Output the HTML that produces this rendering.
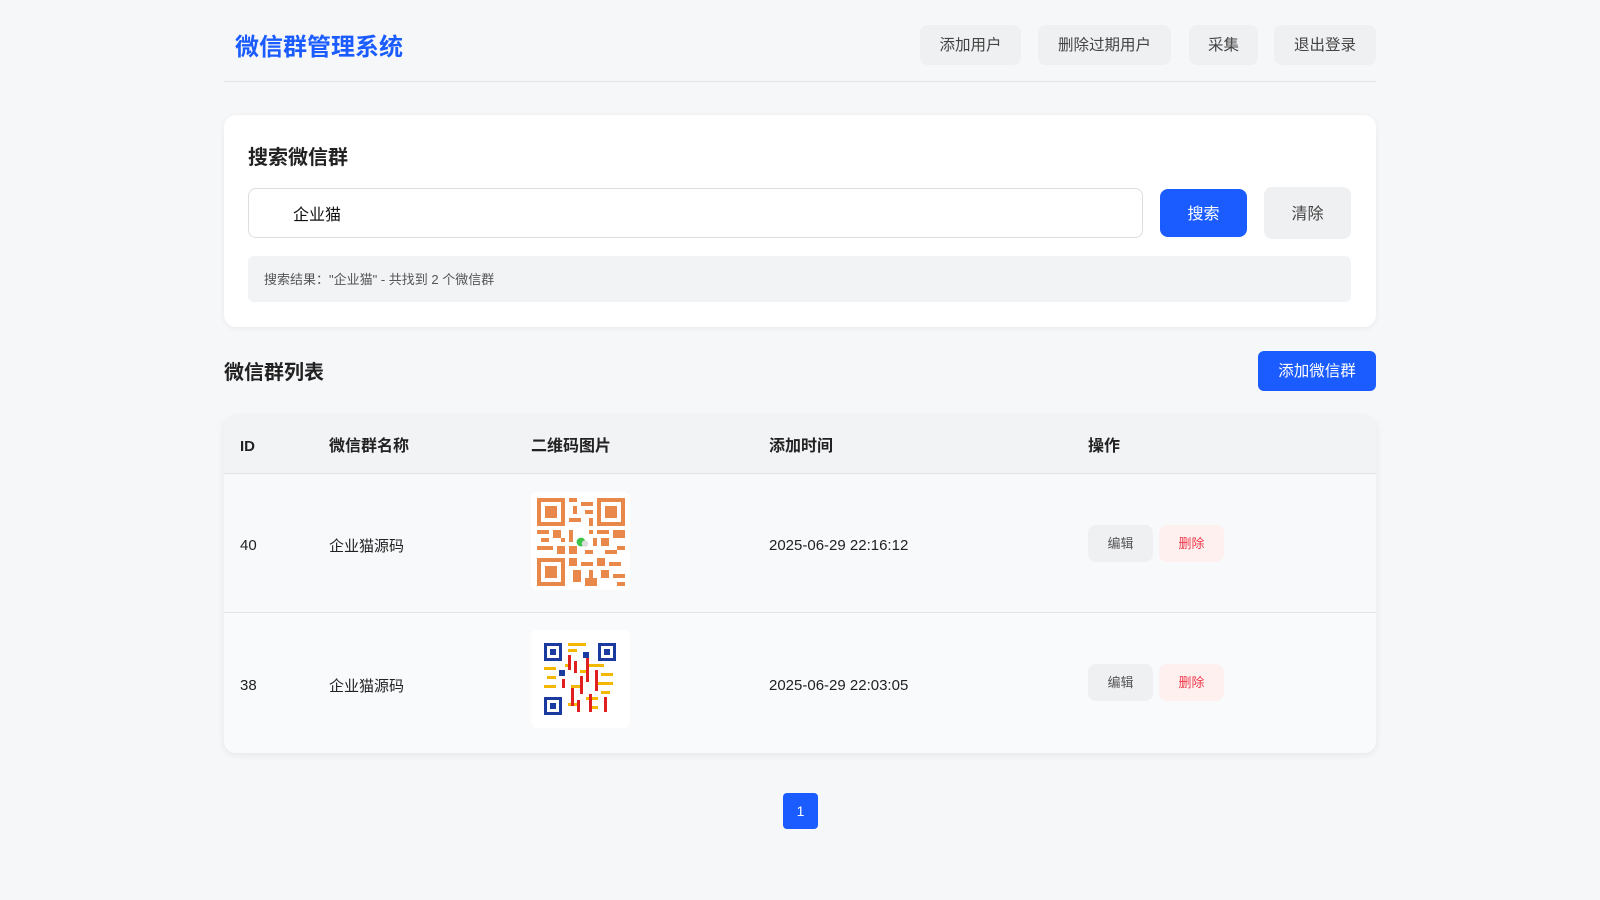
<!DOCTYPE html>
<html><head><meta charset="utf-8"><style>
*{box-sizing:border-box;margin:0;padding:0}
body{width:1600px;height:900px;background:#f6f7f9;font-family:"Liberation Sans","Noto Sans CJK SC",sans-serif;color:#222;position:relative;overflow:hidden}
.abs{position:absolute}
.hbtn{position:absolute;top:25px;height:40px;background:#eff0f2;border-radius:8px;font-size:15.5px;color:#444;line-height:41px;text-align:center}
.card{position:absolute;left:224px;width:1152px;background:#fff;border-radius:12px;box-shadow:0 1px 6px rgba(0,0,0,.06)}
.th{position:absolute;top:2px;line-height:58px;font-size:16px;font-weight:bold;color:#222}
.td{position:absolute;font-size:15px;color:#222}
.eb{position:absolute;width:65px;height:37px;border-radius:8px;font-size:13px;line-height:37px;text-align:center}
</style></head><body>
<div class="abs" style="left:235px;top:31px;font-size:24px;font-weight:bold;color:#1a5cff;line-height:34px">微信群管理系统</div>
<div class="hbtn" style="left:920px;width:101px">添加用户</div>
<div class="hbtn" style="left:1038px;width:133px">删除过期用户</div>
<div class="hbtn" style="left:1189px;width:69px">采集</div>
<div class="hbtn" style="left:1274px;width:102px">退出登录</div>
<div class="abs" style="left:224px;top:81px;width:1152px;height:1px;background:#e3e4e7"></div>

<div class="card" style="top:115px;height:212px">
  <div class="abs" style="left:24px;top:29px;font-size:20px;font-weight:bold;line-height:28px">搜索微信群</div>
  <div class="abs" style="left:24px;top:73px;width:895px;height:50px;border:1px solid #dcdee2;border-radius:8px;font-size:16px;line-height:54px;padding-left:44px;color:#111">企业猫</div>
  <div class="abs" style="left:936px;top:74px;width:87px;height:48px;background:#1a5cff;border-radius:8px;color:#fff;font-size:16px;line-height:52px;text-align:center">搜索</div>
  <div class="abs" style="left:1040px;top:72px;width:87px;height:52px;background:#eff0f2;border-radius:8px;color:#444;font-size:16px;line-height:56px;text-align:center">清除</div>
  <div class="abs" style="left:24px;top:141px;width:1103px;height:46px;background:#f2f3f5;border-radius:6px;font-size:13px;color:#555;line-height:47px;padding-left:16px">搜索结果："企业猫" - 共找到 2 个微信群</div>
</div>

<div class="abs" style="left:224px;top:359px;font-size:20px;font-weight:bold;line-height:28px">微信群列表</div>
<div class="abs" style="left:1258px;top:351px;width:118px;height:40px;background:#1a5cff;border-radius:6px;color:#fff;font-size:15.5px;line-height:42px;text-align:center">添加微信群</div>

<div class="card" style="top:416px;height:337px;background:#f8f9fb;overflow:hidden;box-shadow:0 2px 8px rgba(0,0,0,.07)">
  <div class="abs" style="left:0;top:0;width:1152px;height:58px;background:#f2f3f5;border-bottom:1px solid #e3e4e7"></div>
  <div class="th" style="left:16px;font-size:15px">ID</div>
  <div class="th" style="left:105px">微信群名称</div>
  <div class="th" style="left:307px">二维码图片</div>
  <div class="th" style="left:545px">添加时间</div>
  <div class="th" style="left:864px">操作</div>
  <div class="abs" style="left:0;top:196px;width:1152px;height:1px;background:#e3e4e7"></div>
  <div class="abs" style="left:0;top:197px;width:1152px;height:140px;background:#f9fafc"></div>

  <div class="td" style="left:16px;top:121px">40</div>
  <div class="td" style="left:105px;top:119px">企业猫源码</div>
  <div class="abs" style="left:307px;top:76px;width:99px;height:98px;background:#fff;border-radius:6px"></div>
  <svg class="abs" style="left:313px;top:82px" width="88" height="88" viewBox="0 0 22 22">
    <g fill="#e8884a">
      <path d="M0 0h7v7H0zM15 0h7v7h-7zM0 15h7v7H0z"/>
    </g>
    <g fill="#fff"><path d="M1 1h5v5H1zM16 1h5v5h-5zM1 16h5v5H1z"/></g>
    <g fill="#e8884a"><path d="M2 2h3v3H2zM17 2h3v3h-3zM2 17h3v3H2z"/>
    <path d="M8 0h2v1H8zM11 1h3v1h-3zM9 2h1v2H9zM12 3h2v1h-2zM8 5h3v1H8zM13 5h1v2h-1zM0 8h3v1H0zM4 8h2v2H4zM1 10h2v1H1zM0 12h4v1H0zM5 12h2v2H5zM15 8h3v1h-3zM19 8h3v2h-3zM16 10h2v2h-2zM20 12h2v1h-2zM17 13h3v1h-3zM8 15h2v2H8zM11 16h3v1h-3zM9 18h2v3H9zM13 18h1v2h-1zM12 20h3v2h-3zM15 15h2v2h-2zM18 16h3v1h-3zM16 18h2v2h-2zM19 19h3v1h-3zM20 21h2v1h-2zM8 8h1v3H8zM13 8h1v1h-1zM8 12h2v2H8zM12 13h2v1h-2zM6 10h1v1H6zM14 10h1v2h-1z"/></g>
    <circle cx="11" cy="11" r="1.1" fill="#3cc34a"/><circle cx="12" cy="11.4" r=".8" fill="#ddd"/>
  </svg>
  <div class="td" style="left:545px;top:121px">2025-06-29 22:16:12</div>
  <div class="eb" style="left:864px;top:109px;background:#eff0f2;color:#555">编辑</div>
  <div class="eb" style="left:935px;top:109px;background:#fff0f0;color:#f0394a">删除</div>

  <div class="td" style="left:16px;top:261px">38</div>
  <div class="td" style="left:105px;top:259px">企业猫源码</div>
  <div class="abs" style="left:307px;top:214px;width:99px;height:98px;background:#fff;border-radius:6px"></div>
  <svg class="abs" style="left:320px;top:227px" width="72" height="72" viewBox="0 0 24 24">
    <g fill="#1a3aa0"><path d="M0 0h6v6H0zM18 0h6v6h-6zM0 18h6v6H0z"/></g>
    <g fill="#fff"><path d="M1 1h4v4H1zM19 1h4v4h-4zM1 19h4v4H1z"/></g>
    <g fill="#1a3aa0"><path d="M2 2h2v2H2zM20 2h2v2h-2zM2 20h2v2H2zM13 3h2v2h-2zM5 9h2v2H5z"/></g>
    <g fill="#f5b800"><path d="M8 0h6v1H8zM8 2h3v1H8zM0 8h4v1H0zM15 7h5v1h-5zM1 11h3v1H1zM19 10h4v1h-4zM0 14h4v1H0zM17 13h6v1h-6zM8 20h3v1H8zM14 18h4v1h-4zM19 16h3v1h-3zM7 7h2v1H7zM12 9h2v1h-2zM9 14h3v1H9zM16 21h2v1h-2z"/></g>
    <g fill="#e02020"><path d="M8 4h1v5H8zM10 6h1v4h-1zM14 5h1v8h-1zM12 11h1v6h-1zM17 9h1v7h-1zM9 15h1v6H9zM20 18h1v5h-1zM15 17h1v6h-1zM11 19h1v4h-1zM6 12h1v3H6z"/></g>
  </svg>
  <div class="td" style="left:545px;top:261px">2025-06-29 22:03:05</div>
  <div class="eb" style="left:864px;top:248px;background:#eff0f2;color:#555">编辑</div>
  <div class="eb" style="left:935px;top:248px;background:#fff0f0;color:#f0394a">删除</div>
</div>

<div class="abs" style="left:783px;top:793px;width:35px;height:36px;background:#1a5cff;border-radius:4px;color:#fff;font-size:14px;line-height:36px;text-align:center">1</div>
</body></html>
